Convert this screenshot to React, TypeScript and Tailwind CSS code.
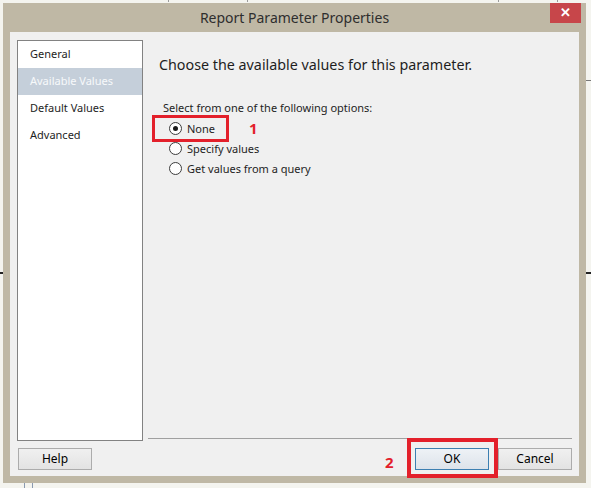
import { useState } from "react";

const navItems = ["General", "Available Values", "Default Values", "Advanced"];
const options = ["None", "Specify values", "Get values from a query"];

function Radio({ checked }: { checked: boolean }) {
  return (
    <span className="flex h-[13px] w-[13px] items-center justify-center rounded-full border border-[#3c3c3c] bg-white">
      {checked && <span className="h-[5px] w-[5px] rounded-full bg-[#1a1a1a]" />}
    </span>
  );
}

function Button({ label, focused }: { label: string; focused?: boolean }) {
  return (
    <button
      className={
        focused
          ? "h-[22px] w-[74px] border border-[#3c7fb1] bg-gradient-to-b from-[#eef2f6] to-[#dde3ea] text-[12px] text-black"
          : "h-[22px] w-[74px] border border-[#acacac] bg-gradient-to-b from-[#f0f0f0] to-[#e3e3e3] text-[12px] text-black"
      }
    >
      {label}
    </button>
  );
}

export default function App() {
  const [active, setActive] = useState(1);
  const [selected, setSelected] = useState(0);

  return (
    <div
      className="relative h-[488px] w-[591px] overflow-hidden bg-[#f4f4ef] pl-[3px] pt-[3px]"
      style={{ fontFamily: '"Noto Sans", "Open Sans", sans-serif' }}
    >
      {/* bits of the window behind */}
      <div className="absolute left-[168px] top-0 h-[2px] w-[80px] border-x border-[#9a9a9a]" />
      <div className="absolute left-[498px] top-0 h-[2px] w-[60px] border-x border-[#9a9a9a]" />
      <div className="absolute right-0 top-[272px] h-[2px] w-[5px] bg-[#222]" />
      <div className="absolute right-0 top-[80px] h-[1px] w-[5px] bg-[#777]" />
      <div className="absolute left-0 top-[272px] h-[2px] w-[3px] bg-[#222]" />
      <div className="absolute bottom-0 left-[24px] h-[5px] w-[9px] border-x border-[#8a9ab0]" />

      <div className="flex h-[480px] w-[583px] flex-col bg-[#bfb8a5] px-[7px] pb-[7px]">
        <div className="relative flex h-[29px] shrink-0 items-center justify-center text-[14px] text-[#2e2e2e]">
          Report Parameter Properties
          <div className="absolute right-[-2px] top-0 flex h-[20px] w-[31px] items-center justify-center bg-[#c7464a] text-[13px] font-bold text-white">
            ✕
          </div>
        </div>

        <div className="flex flex-1 flex-col bg-[#f0f0f0]">
          <div className="flex pl-[7px] pr-[7px] pt-[8px]">
            <div className="flex h-[401px] w-[126px] flex-col border border-[#828282] bg-white">
              {navItems.map((item, i) => (
                <div
                  key={item}
                  onClick={() => setActive(i)}
                  className={
                    active === i
                      ? "flex h-[27px] items-center bg-[#c5cfda] pl-[12px] text-[11px] text-[#f7f9fb]"
                      : "flex h-[27px] items-center pl-[12px] text-[11px] text-[#1e1e1e]"
                  }
                >
                  {item}
                </div>
              ))}
            </div>

            <div className="ml-[5px] flex h-[399px] flex-1 flex-col border-b border-[#a0a0a0] pl-[11px]">
              <div className="mt-[14px] text-[14.3px] text-[#1e1e1e]">
                Choose the available values for this parameter.
              </div>
              <div className="mt-[25px] pl-[4px] text-[11px] text-[#1e1e1e]">
                Select from one of the following options:
              </div>
              <div className="mt-[2px] flex flex-col pl-[10px]">
                {options.map((opt, i) => (
                  <div
                    key={opt}
                    onClick={() => setSelected(i)}
                    className="flex h-[20px] items-center gap-[5px] text-[11px] text-[#1e1e1e]"
                  >
                    <Radio checked={selected === i} />
                    {opt}
                  </div>
                ))}
              </div>
            </div>
          </div>

          <div className="mt-[7px] flex items-center pl-[8px] pr-[7px]">
            <Button label="Help" />
            <div className="ml-auto flex gap-[9px]">
              <Button label="OK" focused />
              <Button label="Cancel" />
            </div>
          </div>
        </div>
      </div>

      {/* annotations */}
      <div className="absolute left-[152px] top-[115px] h-[27px] w-[77px] border-[3px] border-[#e3202b]" />
      <div className="absolute left-[249px] top-[117px] text-[15px] font-bold text-[#e3202b]">1</div>
      <div className="absolute left-[385px] top-[451px] text-[15px] font-bold text-[#e3202b]">2</div>
      <div className="absolute left-[407px] top-[438px] h-[40px] w-[91px] border-[4px] border-[#e3202b]" />
    </div>
  );
}
